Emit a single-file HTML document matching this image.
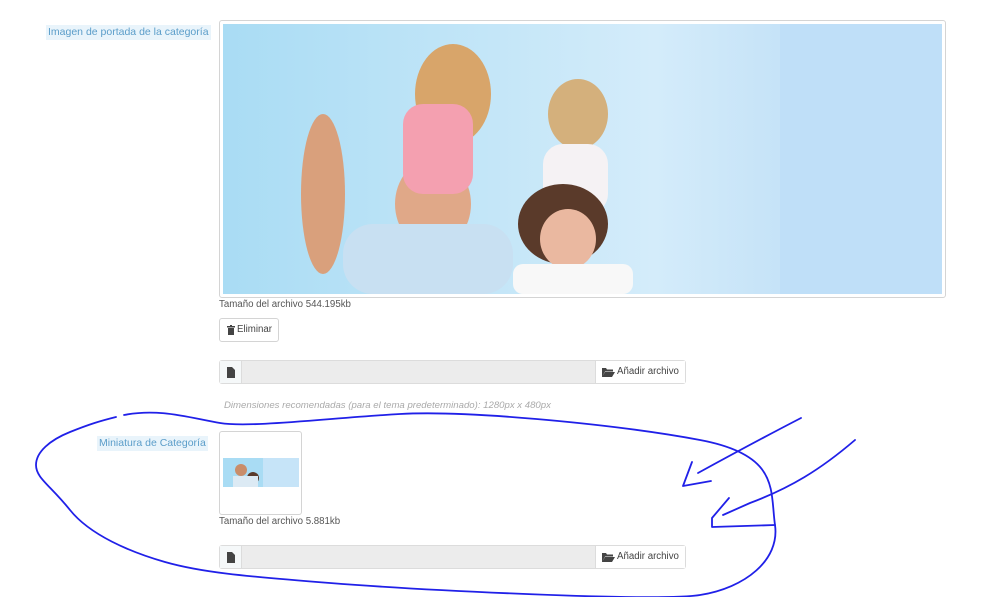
<!DOCTYPE html>
<html><head><meta charset="utf-8"><style>
body{margin:0;width:1000px;height:597px;background:#fff;font-family:"Liberation Sans",sans-serif;position:relative;overflow:hidden;color:#555}
.lbl{position:absolute;background:#e9f4fb;color:#5b9dc9;font-size:10.5px;line-height:15px;padding:0 2px}
.t{position:absolute;font-size:9.7px;color:#555}
.box{position:absolute;border:1px solid #d4d4d4;border-radius:3px;background:#fff}
.inp{position:absolute;height:22px;border:1px solid #dcdcdc;border-radius:3px;background:#ececec}
.inp .ic{position:absolute;left:0;top:0;width:21px;height:22px;background:#f5f8f9;border-right:1px solid #dcdcdc}
.inp .btn{position:absolute;right:0;top:0;width:89px;height:22px;background:#fff;border-left:1px solid #dcdcdc;font-size:9.7px;line-height:22px;color:#444}
.btn svg{position:absolute;left:6px;top:6px}
.btn span{position:absolute;left:21px}
</style></head><body>
<div class="lbl" style="left:46px;top:25px">Imagen de portada de la categoría</div>
<div class="box" style="left:219px;top:20px;width:725px;height:276px;padding:0">
<svg width="719" height="270" style="position:absolute;left:3px;top:3px">
<defs><linearGradient id="g" x1="0" x2="1" y1="0" y2="0"><stop offset="0" stop-color="#a9dcf4"/><stop offset="0.6" stop-color="#d4ecfa"/><stop offset="0.77" stop-color="#c6e3f8"/><stop offset="1" stop-color="#c0e0f8"/></linearGradient></defs>
<rect width="719" height="270" fill="url(#g)"/>
<rect x="557" width="162" height="270" fill="#bfdff8"/>
<ellipse cx="100" cy="170" rx="22" ry="80" fill="#d9a07c"/>
<ellipse cx="215" cy="135" rx="35" ry="25" fill="#3a2a22"/>
<ellipse cx="210" cy="180" rx="38" ry="45" fill="#e0a888"/>
<rect x="120" y="200" width="170" height="70" rx="30" fill="#c8e0f2"/>
<ellipse cx="230" cy="70" rx="38" ry="50" fill="#d8a56a"/>
<rect x="180" y="80" width="70" height="90" rx="20" fill="#f4a0b0"/>
<ellipse cx="355" cy="90" rx="30" ry="35" fill="#d4b07c"/>
<rect x="320" y="120" width="65" height="70" rx="20" fill="#f5f2f4"/>
<ellipse cx="340" cy="200" rx="45" ry="40" fill="#5a3a2a"/>
<ellipse cx="345" cy="215" rx="28" ry="30" fill="#eab8a0"/>
<rect x="290" y="240" width="120" height="30" rx="10" fill="#f8f8f8"/>
</svg></div>
<div class="t" style="left:219px;top:299px">Tamaño del archivo 544.195kb</div>
<div class="box" style="left:219px;top:318px;width:58px;height:22px;font-size:9.7px;line-height:22px;color:#444"><svg width="8" height="10" style="position:absolute;left:7px;top:6px"><path d="M0 1h8v1.5H0zM3 0h2v1H3zM1 3h6v7H1z" fill="#444"/></svg><span style="position:absolute;left:17px">Eliminar</span></div>
<div class="inp" style="left:219px;top:360px;width:465px"><div class="ic"><svg width="21" height="22"><path d="M7 6h5l3 3v8H7z" fill="#444"/></svg></div><div class="btn"><svg width="13" height="10"><path d="M0 1h4l1 1.5h6v2H3L0 10zM3 5h10l-3 5H0z" fill="#444"/></svg><span>Añadir archivo</span></div></div>
<div class="t" style="left:224px;top:400px;color:#aaa;font-style:italic;font-size:9.6px">Dimensiones recomendadas (para el tema predeterminado): 1280px x 480px</div>
<div class="lbl" style="left:97px;top:436px">Miniatura de Categoría</div>
<div class="box" style="left:219px;top:431px;width:81px;height:82px">
<svg width="76" height="29" style="position:absolute;left:3px;top:26px"><rect width="76" height="29" fill="#c6e4f8"/><rect width="40" height="29" fill="#a9dcf4"/><circle cx="18" cy="12" r="6" fill="#c98d6a"/><circle cx="30" cy="20" r="6" fill="#5a3a2a"/><rect x="10" y="18" width="25" height="11" fill="#dceaf4"/></svg></div>
<div class="t" style="left:219px;top:516px">Tamaño del archivo 5.881kb</div>
<div class="inp" style="left:219px;top:545px;width:465px"><div class="ic"><svg width="21" height="22"><path d="M7 6h5l3 3v8H7z" fill="#444"/></svg></div><div class="btn"><svg width="13" height="10"><path d="M0 1h4l1 1.5h6v2H3L0 10zM3 5h10l-3 5H0z" fill="#444"/></svg><span>Añadir archivo</span></div></div>
<svg width="1000" height="597" style="position:absolute;left:0;top:0" fill="none" stroke="#2020e8" stroke-width="1.8" stroke-linecap="round" stroke-linejoin="round">
<path d="M124 415 C160 408 190 418 220 423 S330 418 400 414 S620 425 700 440 S770 490 775 525 S745 588 700 595 S420 590 330 583 S200 572 165 562 S90 535 70 510 S36 478 36 465 S50 440 70 432 S100 421 116 417"/>
<path d="M801 418 C770 434 740 450 698 473 M692 462 L683 486 L711 481"/>
<path d="M855 440 C820 470 790 488 750 503 L723 515 M729 498 L712 518 L712 527 L775 525"/>
</svg>
</body></html>
